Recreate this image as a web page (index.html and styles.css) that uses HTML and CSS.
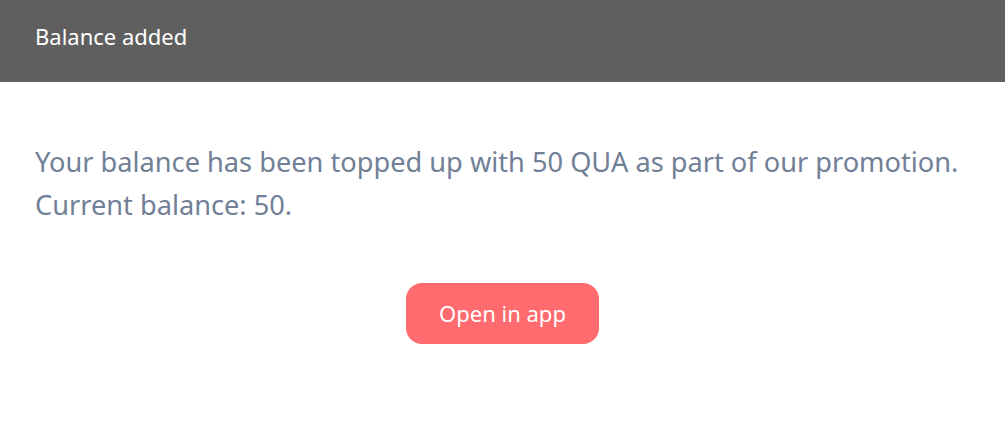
FILE: index.html
```html
<!DOCTYPE html>
<html lang="en">
<head>
    <meta charset="UTF-8">
    <meta name="viewport" content="width=device-width, initial-scale=1.0">
    <title>Balance added</title>
    <link rel="stylesheet" href="styles.css">
</head>
<body>
    <div class="header">
        <h1>Balance added</h1>
    </div>

    <div class="content">
        <p class="message">
            Your balance has been topped up with 50 QUA as part of our promotion.
            Current balance: 50.
        </p>

        <div class="actions">
            <a class="open-button" href="#">Open in app</a>
        </div>
    </div>
</body>
</html>
```

FILE: styles.css
```css
* {
    margin: 0;
    padding: 0;
    box-sizing: border-box;
    font-family: "Noto Sans", "Open Sans", sans-serif;
}

body {
    background-color: white;
}

.header {
    height: 82px;
    background-color: #5f5f5f;
    padding: 21px 35px 0;
}

.header h1 {
    font-size: 22px;
    font-weight: normal;
    color: white;
}

.content {
    padding: 58px 35px 0;
}

.message {
    font-size: 27.2px;
    line-height: 43px;
    color: #718096;
    max-width: 940px;
}

.actions {
    display: flex;
    justify-content: center;
    margin-top: 57px;
}

.open-button {
    display: inline-block;
    padding: 0 33px;
    height: 61px;
    line-height: 61px;
    border-radius: 16px;
    background-color: #ff6b6e;
    color: white;
    font-size: 22px;
    text-decoration: none;
}
```
